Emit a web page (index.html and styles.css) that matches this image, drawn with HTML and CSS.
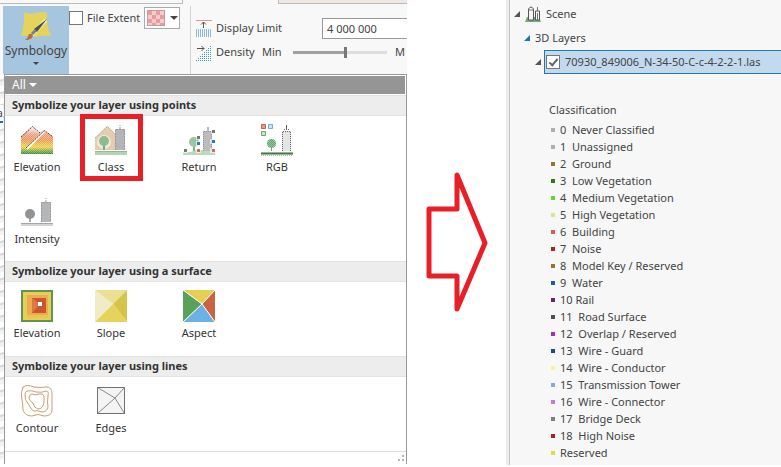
FILE: index.html
```html
<!DOCTYPE html>
<html lang="en">
<head>
    <meta charset="UTF-8">
    <meta name="viewport" content="width=device-width, initial-scale=1.0">
    <title>Symbology</title>
    <link rel="stylesheet" href="styles.css">
</head>
<body>
    <div class="container">
        <section class="ribbon">
            <div class="tabs">
                <div class="tab"></div>
                <div class="tab tab-context"></div>
            </div>
            <div class="tools">
                <button type="button" class="btn-symbology">
                    <svg width="32" height="32" viewBox="0 0 32 32">
                        <path d="M4 1q4 3 12 1q8-2 11 0q-1 12 4 23q-9-1-15 1q-8-2-15-1q4-12 3-24z" fill="#e6d35a"/>
                        <path d="M26 9L11 25" stroke="#f3ebb4" stroke-width="4"/>
                        <path d="M27 8L17 21l-3-3z" fill="#4c4f50"/>
                        <path d="M16 19l-4 4" stroke="#7b7d7e" stroke-width="3"/>
                        <path d="M9 23q4-1 4 2q-1 4-8 4q3-2 4-6z" fill="#b4703c"/>
                    </svg>
                    <span>Symbology</span>
                    <span class="caret"></span>
                </button>
                <div class="extent">
                    <input type="checkbox" class="check" id="file-extent">
                    <label for="file-extent">File Extent</label>
                    <button type="button" class="btn-color" aria-label="Extent colour">
                        <span class="swatch"></span>
                        <span class="caret caret-big"></span>
                    </button>
                </div>
                <div class="limits">
                    <div class="limit-row">
                        <svg width="16" height="17" viewBox="0 0 16 17">
                            <path d="M0 .5h16" stroke="#e39a88"/>
                            <path d="M7.500 8V2M5 4.500L7.500 2L10 4.500" stroke="#555" fill="none"/>
                            <path d="M.5 9v8M2.500 9v8M4.500 9v8M6.500 9v8M8.500 9v8M10.500 9v8M12.500 9v8M14.500 9v8" stroke="#8dbbd5"/>
                        </svg>
                        <label for="limit">Display Limit</label>
                        <input type="text" class="limit-text" id="limit" value="4 000 000">
                    </div>
                    <div class="limit-row">
                        <svg width="16" height="17" viewBox="0 0 16 17">
                            <path d="M1 4.500h7M5.500 2L8 4.500L5.500 7" stroke="#555" fill="none"/>
                            <path d="M14 2.500h2M12 4.500h4M10 6.500h6M8 8.500h8M6 10.500h10M4 12.500h12M2 14.500h14M0 16.500h16" stroke="#3f9ac6" stroke-dasharray="1 1"/>
                        </svg>
                        <label for="density">Density</label>
                        <span class="min">Min</span>
                        <input type="range" class="density" id="density" min="0" max="100" value="56">
                        <span class="max">M</span>
                    </div>
                </div>
            </div>
            <div class="below">
                <div class="map-edge"><span>a</span></div>
                <div class="gallery">
                    <button type="button" class="filter">All <span class="caret caret-big"></span></button>
                    <h2>Symbolize your layer using points</h2>
                    <div class="items items-points">
                        <button type="button" class="item">
                            <svg width="32" height="30" viewBox="0 0 32 30">
                                <defs>
                                    <linearGradient id="heat" x1="0" y1="0" x2="0" y2="1">
                                        <stop offset="0" stop-color="#fff"/>
                                        <stop offset=".3" stop-color="#ee9a80"/>
                                        <stop offset=".5" stop-color="#ee9248"/>
                                        <stop offset=".75" stop-color="#ecd04a"/>
                                        <stop offset="1" stop-color="#23852c"/>
                                    </linearGradient>
                                    <pattern id="dots" width="2" height="2" patternUnits="userSpaceOnUse">
                                        <path d="M0 0h1v1H0zM1 1h1v1H1z" fill="#fff" fill-opacity=".35"/>
                                    </pattern>
                                </defs>
                                <path d="M0 12L11 1l6 7l6-3l9 7v17H0z" fill="url(#heat)"/>
                                <path d="M0 12L11 1l6 7l6-3l9 7v17H0z" fill="url(#dots)"/>
                                <path d="M6 24L23 6.500" stroke="#fff" stroke-width="2"/>
                                <path d="M0 12L11.500 1.500L19 8M5 23L23.500 5.500L32 12" stroke="#444" stroke-dasharray="2 1" fill="none"/>
                            </svg>
                            <span>Elevation</span>
                        </button>
                        <button type="button" class="item item-marked">
                            <svg width="32" height="30" viewBox="0 0 32 30">
                                <path d="M0 13L12 1l8 8v16H0z" fill="#e3ccb0"/>
                                <path d="M0 13L12.500 1.500L20 9" stroke="#c4a98a" stroke-dasharray="2 1" fill="none"/>
                                <circle cx="9" cy="17" r="7" fill="#f2e9dc"/>
                                <path d="M9 16v9" stroke="#78a880" stroke-width="2"/>
                                <circle cx="9" cy="16" r="5" fill="#8dbb91"/>
                                <path d="M20 4h10v21H20z" fill="#b4b5b8"/>
                                <path d="M20.500 25V4.500h9V25M25 4V0" stroke="#999b9e" stroke-dasharray="2 1" fill="none"/>
                                <path d="M0 26h32v4H0z" fill="#b6d3b4"/>
                                <path d="M0 26.500h32" stroke="#91b993"/>
                            </svg>
                            <span>Class</span>
                        </button>
                        <button type="button" class="item">
                            <svg width="32" height="30" viewBox="0 0 32 30">
                                <path d="M0 27h8l3-2h21v5H0z" fill="#bdd9bb"/>
                                <path d="M11 18v8" stroke="#86b38c" stroke-width="2"/>
                                <circle cx="11" cy="17" r="5" fill="#9cc6a1"/>
                                <path d="M20 6h9v20h-9zM24 2h2v4h-2z" fill="#bbbcbe"/>
                                <path d="M20.500 26V6.500h8V26" stroke="#96989a" stroke-dasharray="1 1" fill="none"/>
                                <path d="M13 10h5v5h-5zM13 16h5v5h-5zM28 4h5v5h-5zM27 14h5v5h-5zM0 23h5v5H0zM13 23h5v5h-5zM27 23h5v5h-5z" fill="#fff" fill-opacity=".6"/>
                                <path d="M14 11h3v3h-3zM29 5h3v3h-3zM1 24h3v3H1z" fill="#747679"/>
                                <path d="M14 17h3v3h-3zM29 15h3v3h-3z" fill="#287fb5"/>
                                <path d="M14 24h3v3h-3zM29 24h3v3h-3z" fill="#c7735b"/>
                            </svg>
                            <span>Return</span>
                        </button>
                        <button type="button" class="item">
                            <svg width="32" height="32" viewBox="0 0 32 32">
                                <path d="M.5.500h4v4h-4z" fill="#ed9c82" stroke="#bd6650"/>
                                <path d="M7.500.500h4v4h-4z" fill="#c7e6f7" stroke="#78abc9"/>
                                <path d="M.5 7.500h4v4h-4z" fill="#c6ebc4" stroke="#68a36b"/>
                                <path d="M10.500 18v9" stroke="#7b9c65"/>
                                <circle cx="10.500" cy="19.500" r="4.500" fill="#65a66d"/>
                                <circle cx="10.500" cy="19.500" r="4.500" fill="url(#dots)"/>
                                <path d="M21 7h9v20h-9z" fill="#e3e4e6"/>
                                <path d="M21.500 27V7.500h8V27M23 5.500h5" stroke="#66686c" stroke-dasharray="1 1" fill="none"/>
                                <path d="M25.500 1v4" stroke="#55575a"/>
                                <path d="M0 28h32v3H0z" fill="#91b992"/>
                                <path d="M0 29.500h32" stroke="#596d5d"/>
                                <path d="M0 31.500h32" stroke="#9bc39d" stroke-dasharray="1 1"/>
                            </svg>
                            <span>RGB</span>
                        </button>
                        <button type="button" class="item">
                            <svg width="32" height="30" viewBox="0 0 32 30">
                                <path d="M9 18v7" stroke="#aaa" stroke-width="2"/>
                                <circle cx="9" cy="17" r="5" fill="#919395"/>
                                <path d="M20 5h10v20H20z" fill="#b5b6b8"/>
                                <path d="M20.500 25V5.500h9V25M25 5V1" stroke="#9b9da0" stroke-dasharray="2 1" fill="none"/>
                                <path d="M0 26h32v3H0z" fill="#d4d4d4"/>
                                <path d="M0 26.500h32" stroke="#a5a5a5"/>
                            </svg>
                            <span>Intensity</span>
                        </button>
                    </div>
                    <h2>Symbolize your layer using a surface</h2>
                    <div class="items">
                        <button type="button" class="item">
                            <svg width="32" height="32" viewBox="0 0 32 32">
                                <path d="M1 1h30v30H1z" fill="#e5cf55" stroke="#609652" stroke-width="2"/>
                                <path d="M6 5h21v20H6z" fill="#eeaa4f"/>
                                <path d="M6 25h21v3H6z" fill="#e8c750"/>
                                <path d="M11 8h14v15H11z" fill="#c95832"/>
                                <path d="M11 8l8 6l-8 9z" fill="#dd7847"/>
                                <path d="M17 12h4v4h-4z" fill="#fff"/>
                            </svg>
                            <span>Elevation</span>
                        </button>
                        <button type="button" class="item">
                            <svg width="32" height="32" viewBox="0 0 32 32">
                                <path d="M0 0l18 14L0 32z" fill="#f1ebc8"/>
                                <path d="M0 0h32L18 14z" fill="#ebdf94"/>
                                <path d="M32 0v32L18 14z" fill="#d7c34a"/>
                                <path d="M0 32l18-18l14 18z" fill="#e6d35c"/>
                            </svg>
                            <span>Slope</span>
                        </button>
                        <button type="button" class="item">
                            <svg width="32" height="32" viewBox="0 0 32 32">
                                <path d="M0 0l19 14L0 32z" fill="#5aa25c"/>
                                <path d="M0 0h32L19 14z" fill="#e5cf55"/>
                                <path d="M32 0v32L19 14z" fill="#c96342"/>
                                <path d="M0 32l19-18l13 18z" fill="#6bb2e2"/>
                                <path d="M0 0l19 14L32 0M0 32l19-18l13 18" stroke="#fff" fill="none"/>
                            </svg>
                            <span>Aspect</span>
                        </button>
                    </div>
                    <h2>Symbolize your layer using lines</h2>
                    <div class="items">
                        <button type="button" class="item">
                            <svg width="34" height="32" viewBox="0 0 34 32" fill="none" stroke="#c99f70">
                                <path d="M3 2q4-3 11 0q6 1 12 0q6 0 6 6v17q0 6-8 6q-6-3-12 0q-7 0-9-6q0-5-1-10q-2-7 1-13z"/>
                                <path d="M7 6q5-1 9 1q6 1 10-1q3 0 2 5q-1 6 0 11q-1 5-6 5q-4-2-8-1q-3-1-5-6q-5-6-4-10q0-3 2-4z"/>
                                <path d="M12 9q3 2 7 0q4-1 5 2v6q-1 7-6 7q-4-1-5-6q-5-3-4-6q1-3 3-3z"/>
                            </svg>
                            <span>Contour</span>
                        </button>
                        <button type="button" class="item">
                            <svg width="28" height="32" viewBox="0 0 28 32">
                                <path d="M.5 2.500h27v26H.5z" fill="#f4f4f4"/>
                                <path d="M.5 2.500L18 13L.5 28.500M27.500 2.500L18 13l9.500 15.500" fill="none" stroke="#888"/>
                                <path d="M.5 2.500h27v26H.5z" fill="none" stroke="#717171"/>
                            </svg>
                            <span>Edges</span>
                        </button>
                    </div>
                    <div class="grip">
                        <svg width="6" height="6" viewBox="0 0 6 6"><path d="M4 0h2v2H4zM0 4h2v2H0zM4 4h2v2H4z" fill="#b5b5b5"/></svg>
                    </div>
                </div>
            </div>
        </section>

        <div class="arrow">
            <svg width="62" height="142" viewBox="0 0 62 142">
                <path d="M31 4v34H3v67h28v33l28-66z" fill="none" stroke="#e71f26" stroke-width="5" stroke-linejoin="round"/>
            </svg>
        </div>

        <section class="contents">
            <div class="tree-row tree-scene">
                <span class="open"></span>
                <svg width="16" height="16" viewBox="0 0 16 16">
                    <path d="M2 11h12l2 5H0z" fill="#75a77b"/>
                    <path d="M3.500 14V3q2.500-4 5 0v11zM10.500 14V5h4v9z" fill="#f7f7f7" stroke="#555"/>
                    <path d="M3.500 4h5M12.500 5V1M12.500 7v7" stroke="#777" fill="none"/>
                </svg>
                <span>Scene</span>
            </div>
            <div class="tree-row tree-group">
                <span class="open open-blue"></span>
                <span>3D Layers</span>
            </div>
            <div class="tree-row tree-layer">
                <span class="open"></span>
                <div class="layer">
                    <input type="checkbox" class="check" id="layer" checked>
                    <label for="layer">70930_849006_N-34-50-C-c-4-2-2-1.las</label>
                </div>
            </div>
            <h3>Classification</h3>
            <ul class="legend">
                <li class="grey">0  Never Classified</li>
                <li class="grey">1  Unassigned</li>
                <li class="brown">2  Ground</li>
                <li class="green">3  Low Vegetation</li>
                <li class="lime">4  Medium Vegetation</li>
                <li class="pale">5  High Vegetation</li>
                <li class="rose">6  Building</li>
                <li class="red">7  Noise</li>
                <li class="brown">8  Model Key / Reserved</li>
                <li class="blue">9  Water</li>
                <li class="purple">10 Rail</li>
                <li class="dark">11  Road Surface</li>
                <li class="violet">12  Overlap / Reserved</li>
                <li class="navy">13  Wire - Guard</li>
                <li class="cream">14  Wire - Conductor</li>
                <li class="sky">15  Transmission Tower</li>
                <li class="lilac">16  Wire - Connector</li>
                <li class="steel">17  Bridge Deck</li>
                <li class="red">18  High Noise</li>
                <li class="yellow">Reserved</li>
            </ul>
        </section>
    </div>
</body>
</html>
```
FILE: styles.css
```css
*, *::before, *::after { box-sizing: border-box; }
body {
    margin: 0;
    background: #fff;
    color: #444;
    font-family: "Noto Sans", "Open Sans", sans-serif;
    font-size: 11px;
    line-height: 16px;
}
button, input {
    margin: 0;
    padding: 0;
    border: 0;
    background: none;
    color: inherit;
    font: inherit;
}
svg { display: block; flex: none; }
.container {
    display: flex;
    align-items: flex-start;
}
.caret {
    border: 3px solid transparent;
    border-top-color: #444;
    border-bottom: 0;
}
.caret-big { border-width: 4px 4px 0; }
.check {
    appearance: none;
    flex: none;
    width: 14px;
    height: 14px;
    border: 1px solid #777;
    background: #fff;
}

/* ribbon */
.ribbon {
    flex: 0 0 407px;
    overflow: hidden;
}
.tabs {
    display: flex;
    justify-content: space-between;
    background: #f8f8f8;
}
.tab {
    width: 183px;
    height: 4px;
    border: 1px solid #bbb;
    border-width: 0 1px 1px 0;
}
.tab-context {
    width: 129px;
    border-width: 0 0 1px 1px;
    background: #f1e7e3;
}
.tools {
    display: flex;
    height: 70px;
    padding: 2px 0 0 3px;
    background: #f8f8f8;
}
.btn-symbology {
    display: flex;
    flex-direction: column;
    align-items: center;
    width: 66px;
    padding-top: 5px;
    background: #a5c6de;
    font-size: 12px;
}
.btn-symbology .caret { margin-top: 3px; }
.extent {
    display: flex;
    align-items: center;
    width: 121px;
    height: 24px;
}
.extent label { width: 61px; padding-left: 4px; white-space: nowrap; }
.btn-color {
    display: flex;
    align-items: center;
    gap: 5px;
    width: 36px;
    height: 22px;
    padding-left: 2px;
    border: 1px solid #aaa;
    background: #fff;
}
.swatch {
    width: 18px;
    height: 16px;
    border: 1px solid #c99;
    background: conic-gradient(#f8caca 25%, #e39f9f 0 50%, #f8caca 0 75%, #e39f9f 0) 0 0 / 8px 8px;
}
.limits {
    flex: 1;
    min-width: 0;
    padding: 10px 0 0 5px;
    border-left: 1px solid #d2d2d2;
}
.limit-row {
    display: flex;
    align-items: center;
    gap: 4px;
    height: 24px;
    white-space: nowrap;
}
.limit-row label, .limit-row span { flex: none; }
.limit-text {
    flex: 1;
    min-width: 0;
    height: 21px;
    padding-left: 4px;
    border: 1px solid #999;
    border-right: 0;
    background: #fff;
}
label[for="limit"] { width: 102px; }
label[for="density"] { width: 42px; }
.min { width: 27px; }
.density {
    appearance: none;
    flex: none;
    width: 94px;
    height: 12px;
}
.density::-webkit-slider-runnable-track {
    height: 3px;
    background: linear-gradient(90deg, #a0a0a0 55%, #dedede 0);
}
.density::-webkit-slider-thumb {
    appearance: none;
    width: 3px;
    height: 11px;
    margin-top: -4px;
    background: #777;
}
.max { padding-left: 4px; }

/* gallery drop-down */
.below { display: flex; }
.map-edge {
    width: 4px;
    padding-top: 31px;
    overflow: hidden;
    background: repeating-linear-gradient(165deg, #fff 0 5px, #d8d8d8 6px 7px, #f2f2f2 8px 12px);
}
.map-edge span {
    display: block;
    width: 3px;
    height: 18px;
    border-bottom: 2px solid #1b70ab;
    background: #fff;
    direction: rtl;
}
.gallery {
    flex: 1;
    border: 1px solid #999;
    border-bottom: 0;
    background: #fff;
}
.filter {
    display: flex;
    align-items: center;
    gap: 3px;
    width: calc(100% - 1px);
    height: 18px;
    margin: 1px 0;
    padding-left: 7px;
    background: #959595;
    color: #fff;
    font-size: 12px;
}
.filter .caret { border-top-color: #fff; }
.gallery h2 {
    height: 21px;
    margin: 0;
    padding: 1px 0 0 7px;
    border: 1px solid #e3e3e3;
    border-width: 1px 0;
    background: #ededed;
    color: #333;
    font-size: 11px;
    line-height: 16px;
}
.items {
    display: grid;
    grid-template-columns: 64px 84px 92px 64px;
    height: 74px;
    padding-top: 8px;
}
.items-points {
    grid-template-rows: 72px 64px;
    height: 145px;
}
.item {
    display: flex;
    flex-direction: column;
    align-items: center;
    justify-content: flex-start;
    gap: 3px;
    position: relative;
    color: #333;
}
.item svg { height: 32px; }
.item-marked::after {
    content: "";
    position: absolute;
    top: -10px;
    left: 11px;
    width: 63px;
    height: 67px;
    border: 5px solid #e71f26;
}
.grip {
    display: flex;
    justify-content: flex-end;
    padding: 3px 2px;
    border-top: 1px solid #ddd;
}

.arrow {
    flex: 0 0 99px;
    padding: 171px 0 0 19px;
}

/* contents pane */
.contents {
    flex: 1;
    min-width: 0;
    padding: 4px 0 4px 5px;
    border-left: 3px solid #ededed;
    background: #f7f7f7;
    box-shadow: inset 1px 0 #c4c4c4;
}
.tree-row {
    display: flex;
    align-items: center;
    white-space: nowrap;
}
.open {
    flex: none;
    border: 3px solid #555;
    border-top-color: transparent;
    border-left-color: transparent;
}
.open-blue { border-color: transparent #1b75ae #1b75ae transparent; }
.tree-scene { gap: 5px; height: 20px; }
.tree-group { gap: 5px; height: 26px; padding: 2px 0 0 10px; }
.tree-layer { gap: 3px; height: 24px; padding-left: 21px; }
.layer {
    display: flex;
    flex: 1;
    align-items: center;
    gap: 5px;
    height: 24px;
    padding-left: 1px;
    border: 1px solid #2577aa;
    border-right: 0;
    background: #c3daee;
}
.layer .check:checked { position: relative; }
.layer .check:checked::after {
    content: "";
    position: absolute;
    top: 1px;
    left: 4px;
    width: 5px;
    height: 9px;
    border: solid #666;
    border-width: 0 2px 2px 0;
    transform: rotate(40deg);
}
.contents h3 {
    margin: 28px 0 3px 35px;
    font-size: 11px;
    font-weight: normal;
    line-height: 16px;
}
.legend {
    margin: 0;
    padding: 0 0 0 37px;
    list-style: none;
}
.legend li {
    display: flex;
    align-items: center;
    gap: 5px;
    line-height: 17px;
    white-space: pre;
}
.legend li::before {
    content: "";
    width: 4px;
    height: 4px;
    background: var(--dot);
}
.grey { --dot: #aeaeae; }
.brown { --dot: #997331; }
.green { --dot: #397719; }
.lime { --dot: #69d237; }
.pale { --dot: #d1e990; }
.rose { --dot: #d65c5c; }
.red { --dot: #b32020; }
.blue { --dot: #245cac; }
.purple { --dot: #692080; }
.dark { --dot: #505050; }
.violet { --dot: #a52cba; }
.navy { --dot: #194c83; }
.cream { --dot: #f7f1a0; }
.sky { --dot: #80acde; }
.lilac { --dot: #c17bda; }
.steel { --dot: #7e7e7e; }
.yellow { --dot: #dfdc43; }
```
